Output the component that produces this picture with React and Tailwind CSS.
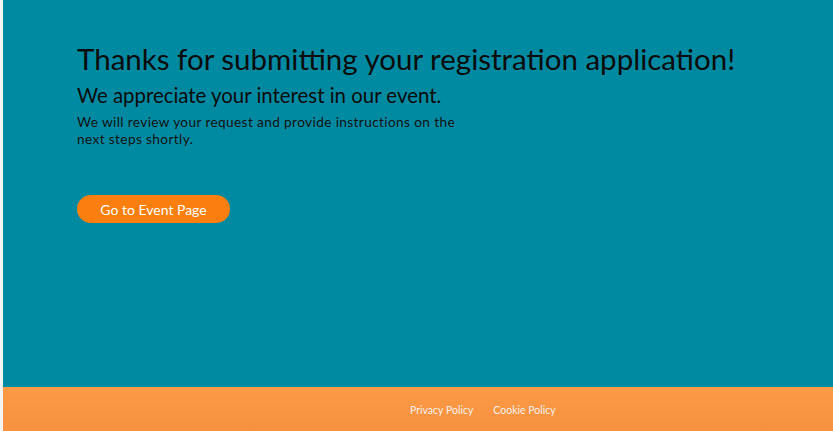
import React from 'react';

const font = { fontFamily: '"Lato", "Noto Sans", sans-serif' };

const App = () => {
  return (
    <div className="w-[833px] h-[431px] flex bg-[#f2f2f2] overflow-hidden" style={font}>
      <div className="w-[3px] shrink-0 bg-[#f4f4f4]" />
      <div className="flex-1 flex flex-col">
        <main className="h-[387px] bg-[#008aa2] pl-[74px] pt-[42px]">
          <h1 className="text-[29.5px] leading-[34px] text-[#0b0b0b]">
            Thanks for submitting your registration application!
          </h1>
          <h2 className="mt-[7px] text-[20.4px] leading-[25px] text-[#0b0b0b]">
            We appreciate your interest in our event.
          </h2>
          <p className="mt-[6px] w-[390px] text-[13.6px] leading-[17px] tracking-[0.4px] text-[#111]">
            We will review your request and provide instructions on the next steps shortly.
          </p>
          <button className="mt-[47px] h-[28px] w-[153px] rounded-full bg-[#fb7f0e] text-[14px] text-white">
            Go to Event Page
          </button>
        </main>
        <footer className="flex-1 bg-gradient-to-b from-[#fd9a46] to-[#f5913f] flex items-center pt-[4px] pl-[407px] gap-[20px] text-[10.5px] text-[#f7f1ea]">
          <a href="#">Privacy Policy</a>
          <a href="#">Cookie Policy</a>
        </footer>
      </div>
    </div>
  );
};

export default App;
